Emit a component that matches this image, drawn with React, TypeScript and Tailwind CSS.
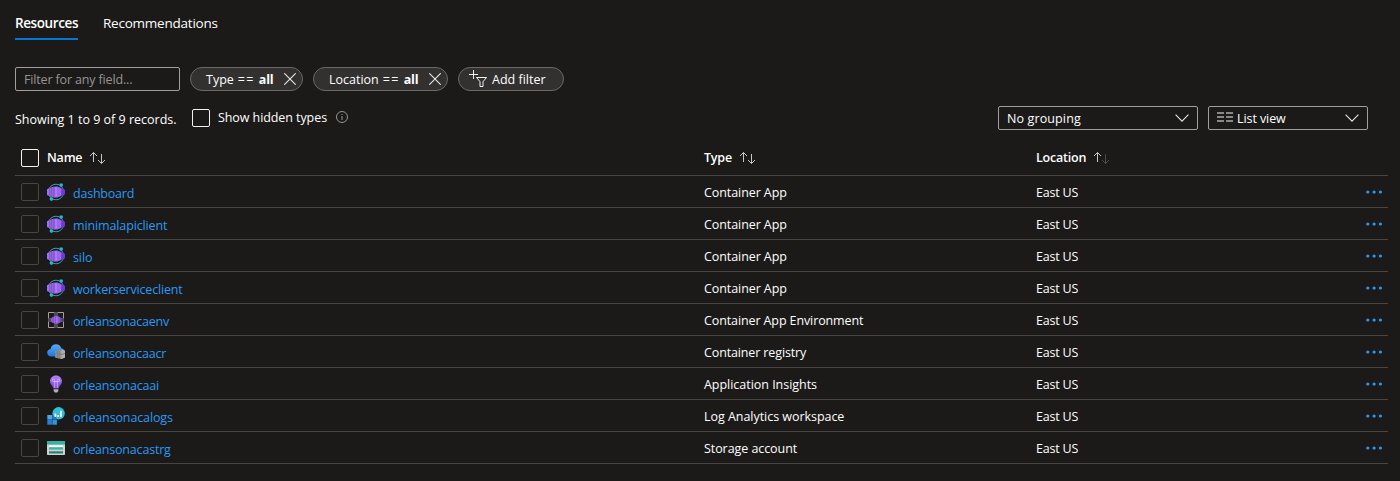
import React from "react";

type Kind = "app" | "env" | "registry" | "insights" | "logs" | "storage";

const rows: { name: string; type: string; kind: Kind; track: string; typeTrack: string }[] = [
  { name: "dashboard", type: "Container App", kind: "app", track: "tracking-[-0.22px]", typeTrack: "tracking-[-0.08px]" },
  { name: "minimalapiclient", type: "Container App", kind: "app", track: "tracking-[-0.13px]", typeTrack: "tracking-[-0.08px]" },
  { name: "silo", type: "Container App", kind: "app", track: "tracking-[-0.1px]", typeTrack: "tracking-[-0.08px]" },
  { name: "workerserviceclient", type: "Container App", kind: "app", track: "tracking-[-0.18px]", typeTrack: "tracking-[-0.08px]" },
  { name: "orleansonacaenv", type: "Container App Environment", kind: "env", track: "tracking-[-0.22px]", typeTrack: "tracking-[-0.11px]" },
  { name: "orleansonacaacr", type: "Container registry", kind: "registry", track: "tracking-[-0.22px]", typeTrack: "tracking-[-0.13px]" },
  { name: "orleansonacaai", type: "Application Insights", kind: "insights", track: "tracking-[-0.18px]", typeTrack: "tracking-[-0.03px]" },
  { name: "orleansonacalogs", type: "Log Analytics workspace", kind: "logs", track: "tracking-[-0.13px]", typeTrack: "tracking-[-0.04px]" },
  { name: "orleansonacastrg", type: "Storage account", kind: "storage", track: "tracking-[-0.19px]", typeTrack: "tracking-[-0.07px]" },
];

function ResourceIcon({ kind }: { kind: Kind }) {
  return (
    <svg width="18" height="18" viewBox="0 0 18 18" className="shrink-0">
      <defs>
        <linearGradient id="violet" x1="0" x2="1">
          <stop offset="0" stopColor="#8a4fe0" />
          <stop offset=".5" stopColor="#a674f2" />
          <stop offset="1" stopColor="#6f35cf" />
        </linearGradient>
        <linearGradient id="bulb" x1="0" y1="0" x2="0" y2="1">
          <stop offset="0" stopColor="#b184f4" />
          <stop offset="1" stopColor="#7a45d6" />
        </linearGradient>
        <linearGradient id="cloud" x1="0" y1="0" x2="0" y2="1">
          <stop offset="0" stopColor="#5aa7f2" />
          <stop offset="1" stopColor="#1b7ade" />
        </linearGradient>
      </defs>
      {kind === "app" && (
        <>
          <circle cx="9" cy="9" r="7.8" fill="none" stroke="#2aa0b5" strokeWidth="1" />
          <path d="M0 6.200 2.600 5.200v7.600L0 12z" fill="#a36ff0" />
          <path d="M13.500 5.200 18 6.700v4.600l-4.500 1.700z" fill="#7435d6" />
          <path d="M2.400 4.900 6.300 3.700v10.800L2.400 13.200z" fill="#9460e6" />
          <path d="m6.300 3.700 4-.2v11l-4 0z" fill="#a877f3" />
          <path d="m10 3.500 4.300 1.600v8L10 14.500z" fill="#9a66ec" />
          <path d="M4.500 4.700v8.800M7.300 4v10" stroke="#7f4bd6" strokeWidth=".7" />
          <circle cx="14.200" cy="2.100" r="1.800" fill="#2bb6d1" />
          <circle cx="4.400" cy="16.100" r="1.800" fill="#2bb6d1" />
        </>
      )}
      {kind === "env" && (
        <>
          <path d="M7.700 1h2.600v16H7.700zM1 7.700h16v2.600H1z" fill="#4f4e4d" />
          <path d="M7.500 1.500h-6v6M10.500 1.500h6v6M1.500 10.500v6h6M16.500 10.500v6h-6" fill="none" stroke="#a3a19f" />
          <path d="M7.500 1.500v6h-6M10.500 1.500v6h6M1.500 10.500h6v6M16.500 10.500h-6v6" fill="none" stroke="#6a6867" strokeWidth=".6" />
          <path d="m4 7 3.500-1.700h3.700l3.300 1.700v4l-3.300 1.600H7.500L4 11.100z" fill="url(#violet)" />
          <path d="M6.300 6.200v5.700M8.500 5.500v7" stroke="#7639ca" strokeWidth=".6" />
        </>
      )}
      {kind === "registry" && (
        <>
          <path d="M4.500 13.600C2 13.600.2 12.100.2 9.800c0-2 1.400-3.400 3.300-3.700C4 3.300 6.200 1.300 9 1.300c2.700 0 4.600 1.600 5.300 4 2 .2 3.500 1.800 3.500 4 0 2.400-1.700 4.300-4 4.300z" fill="url(#cloud)" />
          <path d="m8.200 8 6.200-1.500L18 7.700v6.700l-3.600 1.700-6.200-1.300z" fill="#959595" />
          <path d="m14.400 6.500 3.600 1.200v6.700l-3.600 1.700z" fill="#adadad" />
          <path d="m8.200 10.600 6.200.9 3.600-1M10.200 8v2.500M12.200 7.500v3.300M10.200 12v3M12.200 12v3.400" fill="none" stroke="#6b6b6b" strokeWidth=".7" />
        </>
      )}
      {kind === "insights" && (
        <>
          <path d="M9 .4c3.400 0 6 2.500 6 5.700 0 3.400-2.900 4.600-3.300 7.400H6.300C5.900 10.700 3 9.500 3 6.100 3 2.900 5.600.4 9 .4z" fill="url(#bulb)" />
          <path d="M7.700 13V6.200M10.300 13V6.200M7.700 6.500H6.500a1.200 1.200 0 1 1 1.200-1.200zm0 0h2.600m0 0h1.200a1.200 1.200 0 1 0-1.200-1.200z" fill="none" stroke="#dcc8fa" strokeWidth=".7" />
          <path d="M6.700 14.200h4.600v1.700l-1.100 1.500H7.800l-1.100-1.500z" fill="#b4b2b0" />
        </>
      )}
      {kind === "logs" && (
        <>
          <path d="M.3 8h5v4.600h-5z" fill="#4ca4ea" />
          <path d="M.3 13h4.600v4.700H.3z" fill="#2580d1" />
          <path d="M5.300 13h4.600v4.700H5.300z" fill="#3392df" />
          <path d="M5.300 8h4.600v4.600H5.300z" fill="#1765aa" />
          <circle cx="11.600" cy="6.300" r="6.200" fill="#31bddc" />
          <path d="M5.400 8.500h3.200l1.300 3.700v.4H5.400z" fill="#2675b9" />
          <path d="M7.500 6.500h1.700V10H7.500zM10.300 8h1.700v2h-1.700zM13 3.700h1.700V10H13z" fill="#fff" />
        </>
      )}
      {kind === "storage" && (
        <>
          <path d="M0 2h18v13.200a.8.8 0 0 1-.8.800H.8a.8.8 0 0 1-.8-.800z" fill="#d0d2d1" />
          <path d="M0 2h18v3.600H0z" fill="#34b3a0" />
          <path d="M2 6.400h14v1.600H2z" fill="#fff" />
          <path d="M2 8.300h14v2.300H2z" fill="#37b5a4" />
          <path d="M2 12.300h14v2.200H2z" fill="#258277" />
        </>
      )}
    </svg>
  );
}

function Sort({ dimDown = false }: { dimDown?: boolean }) {
  return (
    <svg width="17" height="14" viewBox="0 0 17 14" fill="none" stroke="#c8c6c4" className="shrink-0">
      <path d="M4.500 11V1.500M1 5l3.500-3.500L8 5" />
      <path d="M12.500 3v9.500M9 9l3.500 3.500L16 9" stroke={dimDown ? "#4b4a48" : "#c8c6c4"} />
    </svg>
  );
}

function Close() {
  return (
    <svg width="12" height="12" viewBox="0 0 12 12" stroke="#e8e6e4" strokeWidth="1.1" className="shrink-0">
      <path d="m.3.3 11.400 11.400M11.700.3.300 11.700" />
    </svg>
  );
}

function Chevron() {
  return (
    <svg width="14" height="8" viewBox="0 0 14 8" fill="none" stroke="#e8e6e4" strokeWidth="1.1" className="shrink-0">
      <path d="m.6.7 6.400 6.400L13.400.700" />
    </svg>
  );
}

const grid = "grid grid-cols-[32px_657px_332px_1fr_30px] h-8 border-b border-[#474644]";

export default function App() {
  return (
    <div className="h-[481px] w-[1400px] overflow-hidden bg-[#1b1a19] pl-[15px] font-['Open_Sans',sans-serif] text-[12.5px] leading-[18px] whitespace-nowrap text-white">
      <nav className="flex h-10 gap-[25px] pt-[14px] text-[13.5px]">
        <div className="w-[63px] border-b-2 border-[#0078d4] font-semibold tracking-[-0.4px]">Resources</div>
        <div className="tracking-[-0.23px]">Recommendations</div>
      </nav>

      <div className="mt-[27px] flex h-6 gap-[10px]">
        <input
          className="h-6 w-[165px] rounded-[2px] border border-[#a19f9d] bg-transparent px-2 tracking-[-0.15px] placeholder:text-[#979593] outline-none"
          placeholder="Filter for any field..."
        />
        <div className="flex w-[113px] items-center justify-between rounded-full border border-[#6b6967] bg-[#323130] pr-[6px] pl-[15px]">
          <span className="flex gap-1 pt-[2px]"><span>Type</span><span className="tracking-[1.3px]">==</span><b className="tracking-[-0.15px]">all</b></span>
          <Close />
        </div>
        <div className="flex w-[135px] items-center justify-between rounded-full border border-[#6b6967] bg-[#323130] pr-[6px] pl-[15px]">
          <span className="flex gap-1 pt-[2px]"><span>Location</span><span className="tracking-[1.3px]">==</span><b className="tracking-[-0.15px]">all</b></span>
          <Close />
        </div>
        <div className="flex w-[106px] items-center gap-[5px] rounded-full border border-[#6b6967] bg-[#323130] pl-[10px]">
          <svg width="18" height="18" viewBox="0 0 18 18" fill="none" stroke="#f3f2f1" className="shrink-0">
            <path d="M4.500 0v9M0 4.500h9" />
            <path d="M7.500 7.500h10l-3.500 4.200v4.800h-3v-4.800z" />
          </svg>
          <span className="pt-[2px]">Add filter</span>
        </div>
      </div>

      <div className="mt-[15px] flex h-6">
        <span className="w-[177px] pt-[5px]">Showing 1 to 9 of 9 records.</span>
        <span className="mt-[3px] h-[18px] w-[18px] rounded-[2px] border border-[#f3f2f1]" />
        <span className="ml-2 w-[118px] pt-[3px] tracking-[-0.08px]">Show hidden types</span>
        <svg width="12" height="12" viewBox="0 0 12 12" fill="none" stroke="#979593" className="mt-[5px]">
          <circle cx="6" cy="6" r="5.500" />
          <path d="M6 5v4M6 3v1" />
        </svg>
        <div className="ml-auto flex w-[200px] items-center justify-between rounded-[2px] border border-[#a19f9d] pr-2 pl-2">
          <span className="pt-[2px] tracking-[0.12px]">No grouping</span>
          <Chevron />
        </div>
        <div className="mr-8 ml-[10px] flex w-[160px] items-center rounded-[2px] border border-[#a19f9d] px-2">
          <svg width="16" height="10" viewBox="0 0 16 10" fill="#8a8886" className="mr-1 -mt-[2px]">
            <path d="M0 0h7v2H0zM9 0h7v2H9zM0 4h7v2H0zM9 4h7v2H9zM0 8h7v2H0zM9 8h7v2H9z" />
          </svg>
          <span className="grow pt-[2px] tracking-[-0.08px]">List view</span>
          <Chevron />
        </div>
      </div>

      <div className="mt-[14px] mr-3">
        <div className={grid}>
          <div className="pt-[5px] pl-[6px]">
            <div className="h-[18px] w-[18px] rounded-[2px] border border-[#f3f2f1]" />
          </div>
          <div className="flex items-start gap-[7px] pt-[5px] font-semibold tracking-[-0.2px]">
            Name<span className="pt-[2px]"><Sort /></span>
          </div>
          <div className="flex items-start gap-[7px] pt-[5px] font-semibold tracking-[-0.2px]">
            Type<span className="pt-[2px]"><Sort /></span>
          </div>
          <div className="flex items-start gap-[7px] pt-[5px] font-semibold tracking-[-0.2px]">
            Location<span className="pt-[2px]"><Sort dimDown /></span>
          </div>
        </div>
        {rows.map((r) => (
          <div key={r.name} className={grid}>
            <div className="pt-[7px] pl-[6px]">
              <div className="h-[18px] w-[18px] rounded-[2px] border border-[#484644]" />
            </div>
            <div className="flex gap-2 pt-[7px]">
              <ResourceIcon kind={r.kind} />
              <a className={`pt-[2px] text-[#2899f5] ${r.track}`}>{r.name}</a>
            </div>
            <div className={`pt-2 ${r.typeTrack}`}>{r.type}</div>
            <div className="pt-2 tracking-[-0.2px]">East US</div>
            <svg width="16" height="4" viewBox="0 0 16 4" fill="#2899f5" className="mt-[14px] ml-[8px]">
              <circle cx="1.800" cy="2" r="1.600" />
              <circle cx="8.100" cy="2" r="1.600" />
              <circle cx="14.400" cy="2" r="1.600" />
            </svg>
          </div>
        ))}
      </div>
    </div>
  );
}
